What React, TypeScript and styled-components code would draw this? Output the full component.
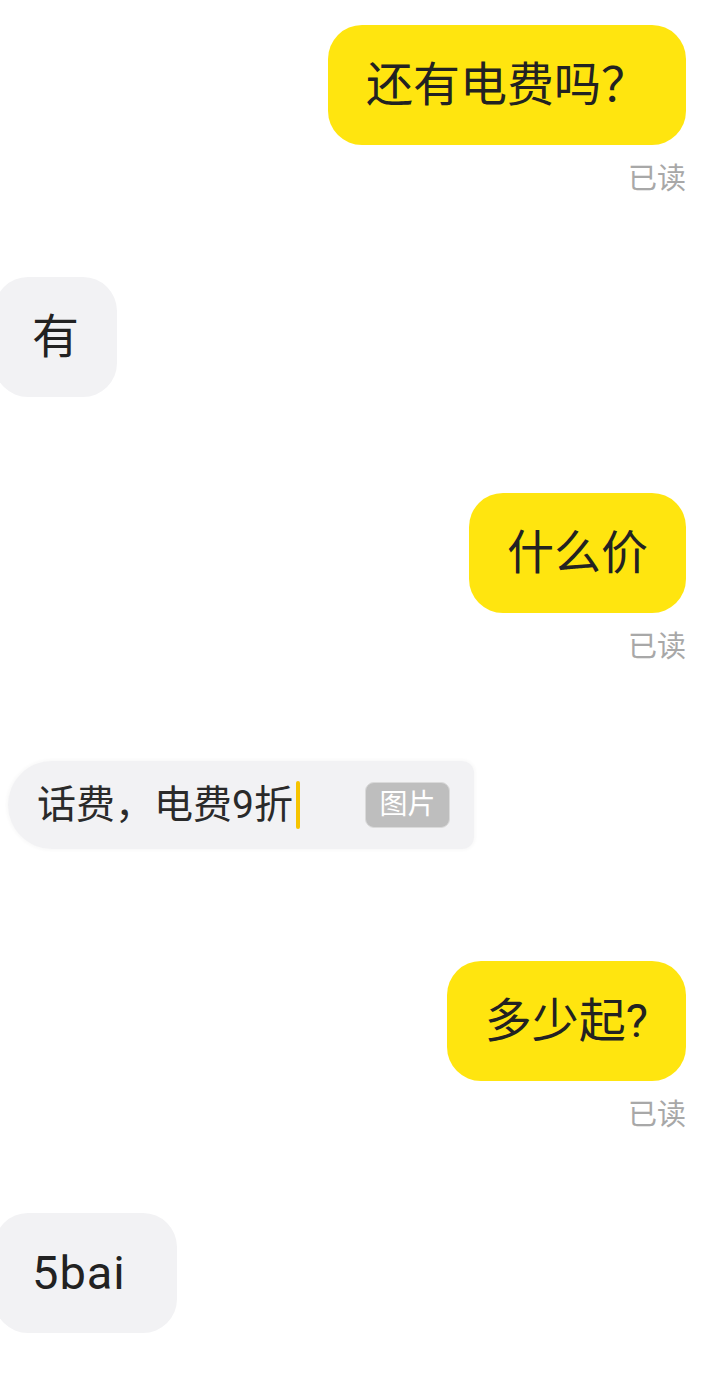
import * as React from 'react';
import styled, { createGlobalStyle } from 'styled-components';

const GlobalStyle = createGlobalStyle`
    html, body {
        margin: 0;
        padding: 0;
        background: #ffffff;
    }
    body {
        font-family: Roboto, "Noto Sans CJK SC", sans-serif;
        overflow: hidden;
    }
`

const Page = styled.div`
    width: 701px;
    height: 1375px;
    box-sizing: border-box;
    padding: 0 15px 0 0;
    display: flex;
    flex-direction: column;
    overflow: hidden;
`

interface SpaceProps {
    readonly $top: number;
}

const Row = styled.div<SpaceProps & { readonly $mine?: boolean }>`
    display: flex;
    justify-content: ${props => props.$mine ? 'flex-end' : 'flex-start'};
    margin-top: ${props => props.$top}px;
    margin-left: ${props => props.$mine ? '0' : '-6px'};
`

interface BubbleProps {
    readonly $mine?: boolean;
    readonly $latin?: boolean;
}

const Bubble = styled.div<BubbleProps>`
    box-sizing: border-box;
    height: 120px;
    padding: 30px ${props => props.$latin ? 51 : 38}px 30px 38px;
    border-radius: 34px;
    background: ${props => props.$mine ? '#ffe50f' : '#f2f2f4'};
    color: #222222;
    font-size: 47px;
    line-height: 60px;
    letter-spacing: ${props => props.$latin ? '1px' : '0'};
    white-space: nowrap;
`

const ReadMark = styled.div<SpaceProps>`
    margin-top: ${props => props.$top}px;
    align-self: flex-end;
    font-size: 29px;
    line-height: 30px;
    color: #a8a8a8;
`

const InputRow = styled.div<SpaceProps>`
    margin-top: ${props => props.$top}px;
    margin-left: 8px;
    width: 466px;
    height: 88px;
    box-sizing: border-box;
    padding: 0 24px 0 29px;
    display: flex;
    align-items: center;
    background: #f2f2f4;
    border-radius: 44px 12px 12px 44px;
    box-shadow: 0 0 3px 2px rgba(0, 0, 0, 0.025);
`

const InputText = styled.span`
    font-size: 39px;
    line-height: 48px;
    color: #2a2a2a;
    white-space: nowrap;
`

const Caret = styled.span`
    width: 4px;
    height: 48px;
    margin-left: 3px;
    border-radius: 2px;
    background: #f6c400;
`

const Spacer = styled.span`
    flex: 1;
`

const Tag = styled.span`
    box-sizing: border-box;
    width: 85px;
    height: 46px;
    display: flex;
    align-items: center;
    justify-content: center;
    border-radius: 9px;
    border: 1px solid #dadada;
    background: #bebebe;
    color: #ffffff;
    font-size: 28px;
    line-height: 1;
`

export default function App() {
    return (
        <Page>
            <GlobalStyle />
            <Row $mine $top={25}>
                <Bubble $mine>还有电费吗？</Bubble>
            </Row>
            <ReadMark $top={19}>已读</ReadMark>

            <Row $top={83}>
                <Bubble>有</Bubble>
            </Row>

            <Row $mine $top={96}>
                <Bubble $mine>什么价</Bubble>
            </Row>
            <ReadMark $top={19}>已读</ReadMark>

            <InputRow $top={99}>
                <InputText>话费，电费9折</InputText>
                <Caret />
                <Spacer />
                <Tag>图片</Tag>
            </InputRow>

            <Row $mine $top={112}>
                <Bubble $mine>多少起?</Bubble>
            </Row>
            <ReadMark $top={19}>已读</ReadMark>

            <Row $top={83}>
                <Bubble $latin>5bai</Bubble>
            </Row>
        </Page>
    )
}
